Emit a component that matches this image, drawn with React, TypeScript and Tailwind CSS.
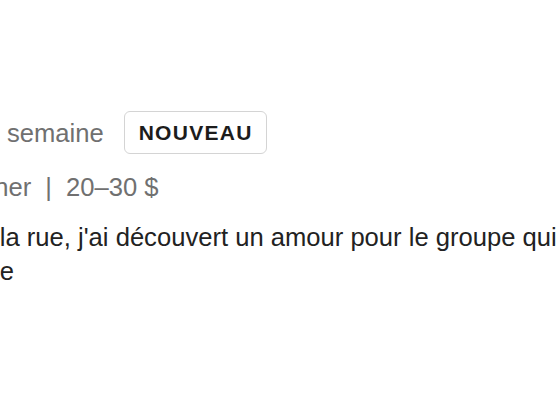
export default function App() {
  return (
    <div className="w-[560px] h-[400px] overflow-hidden bg-white" style={{ fontFamily: '"Liberation Sans", Arial, sans-serif' }}>
      <div className="ml-[-105.5px] w-[950px] pt-[111px]">
        <div className="flex items-center gap-[20px]">
          <span className="text-[25.6px] leading-[32px] text-[#707070]">
            <span>Il y a 1</span>
            <span className="ml-[37px]">semaine</span>
          </span>
          <span className="flex h-[43px] items-center rounded-[6px] border border-[#d4d4d4] pl-[14px] pr-[13px] text-[21px] font-bold tracking-[1.3px] text-[#1c1c1c]">
            NOUVEAU
          </span>
        </div>
        <div className="mt-[17px] flex items-center text-[25.6px] leading-[32px] text-[#707070]">
          <span>Pub</span>
          <span className="mx-[11px]">|</span>
          <span>Dîner</span>
          <span className="mx-[14px]">|</span>
          <span>20–30 $</span>
        </div>
        <p className="mt-[17px] text-[25.6px] leading-[34px] text-[#222222]">
          Là, dans la rue, j'ai découvert un amour pour le groupe qui jouait de la musique portugaise
        </p>
      </div>
    </div>
  );
}
